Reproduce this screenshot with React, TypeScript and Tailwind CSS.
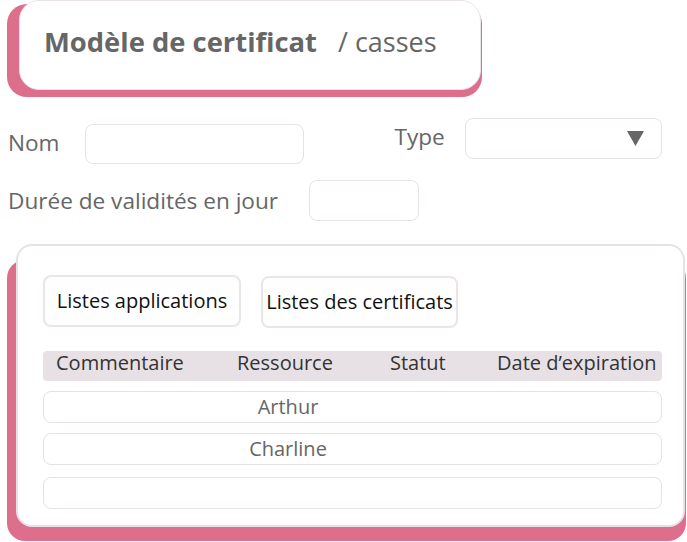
import React from 'react';

const cols = 'grid grid-cols-[181px_153px_107px_1fr]';

function Field({ className }: { className: string }) {
    return <div className={`rounded-[8px] border border-[#e7e0e5] bg-white ${className}`} />;
}

export default function App() {
    const rows = ['Arthur', 'Charline', ''];

    return (
        <div className="h-[542px] w-[687px] overflow-hidden bg-white font-['Open_Sans',sans-serif] text-[#666]">
            {/* titre */}
            <div className="ml-[7px] mt-[4px] flow-root w-[475px] rounded-[20px] bg-[#dd6e8c] pl-[12px]">
                <div className="-mt-[4px] mb-[7px] flex h-[90px] w-[462px] items-center rounded-[20px] border border-[#ebe3e8] bg-white pb-[6px] pl-[24px]">
                    <span className="text-[27.4px] font-bold text-[#666]">Modèle de certificat</span>
                    <span className="ml-[21px] text-[27px] text-[#666]">/ casses</span>
                </div>
            </div>

            {/* formulaire */}
            <div className="mt-[21px] flex items-start">
                <span className="ml-[8px] mt-[8px] text-[22.6px]">Nom</span>
                <Field className="ml-[25px] mt-[6px] h-[40px] w-[219px]" />
                <span className="ml-[91px] mt-[2px] text-[22.6px]">Type</span>
                <div className="ml-[20px] flex h-[41px] w-[197px] items-center justify-end rounded-[8px] border border-[#e7e0e5] pr-[17px]">
                    <svg width="17" height="15" viewBox="0 0 17 15">
                        <polygon points="0,0 17,0 8.5,15" fill="#666" />
                    </svg>
                </div>
            </div>
            <div className="mt-[16px] flex items-center">
                <span className="ml-[8px] text-[22.6px]">Durée de validités en jour</span>
                <Field className="ml-[31px] h-[41px] w-[110px]" />
            </div>

            {/* listes */}
            <div className="ml-[7px] mt-[39px] flow-root w-[679px] rounded-[18px] bg-[#dd6e8c] pl-[9px]">
                <div className="-mt-[16px] mb-[14px] h-[283px] w-[669px] rounded-[16px] border-2 border-[#e7e1e6] bg-white pl-[25px] pr-[21px] pt-[29px]">
                    <div className="flex gap-[20px] text-[20px] text-[#111]">
                        <button className="h-[52px] w-[198px] rounded-[8px] border-2 border-[#ebe4e9] bg-white">
                            Listes applications
                        </button>
                        <button className="mt-[1px] h-[52px] w-[197px] rounded-[8px] border-2 border-[#ebe4e9] bg-white">
                            Listes des certificats
                        </button>
                    </div>

                    <div className={`${cols} mt-[23px] h-[30px] items-start rounded-[4px] bg-[#e7e1e6] pl-[13px] text-[20px] leading-[24px] text-[#333]`}>
                        <span>Commentaire</span>
                        <span>Ressource</span>
                        <span>Statut</span>
                        <span>Date d’expiration</span>
                    </div>

                    <div className="mt-[10px] flex flex-col gap-[10px]">
                        {rows.map((name, i) => (
                            <div
                                key={i}
                                className={`grid h-[32px] grid-cols-[194px_100px_1fr] items-center rounded-[8px] border border-[#e7e0e5] text-[20px] ${i === 2 ? 'mt-[2px]' : ''}`}
                            >
                                <span />
                                <span className="text-center">{name}</span>
                            </div>
                        ))}
                    </div>
                </div>
            </div>
        </div>
    );
}
